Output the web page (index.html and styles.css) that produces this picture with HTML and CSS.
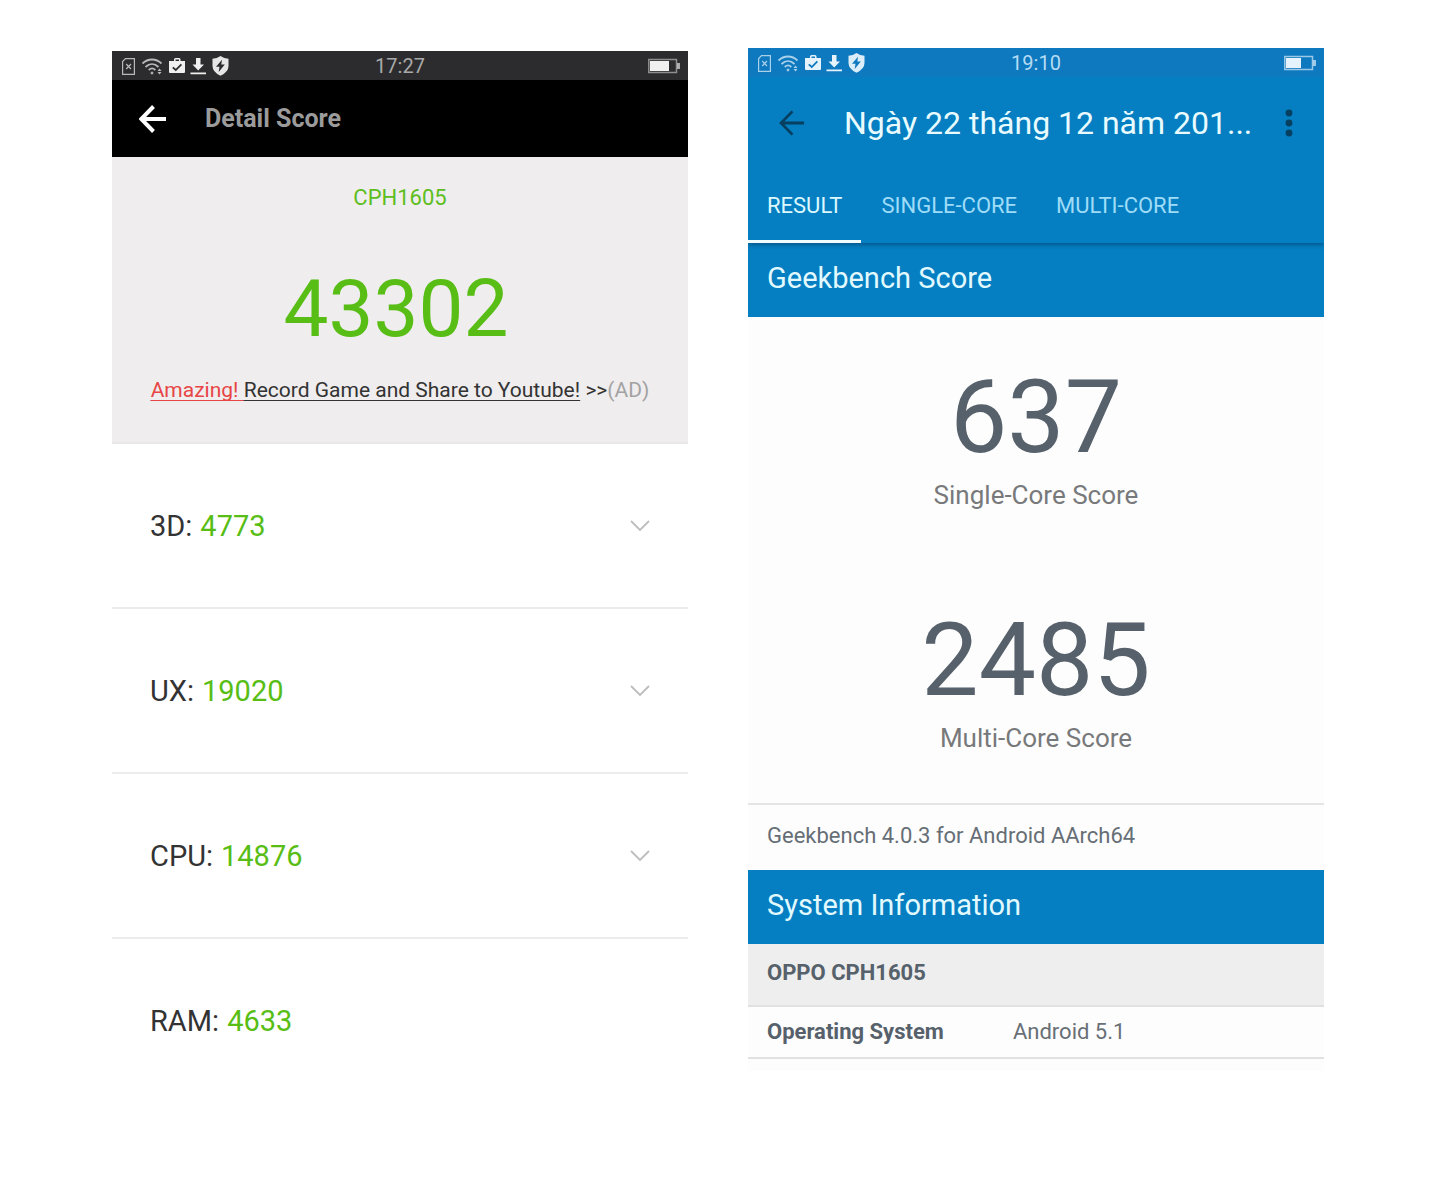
FILE: index.html
```html
<!DOCTYPE html>
<html lang="en">
<head>
<meta charset="utf-8">
<title>Benchmark results</title>
<link rel="stylesheet" href="styles.css">
</head>
<body>
<svg class="sprite" aria-hidden="true">
  <symbol id="status-icons" viewBox="0 0 110 22">
    <g fill="none" stroke="currentColor" opacity=".72">
      <path stroke-width="1.2" d="M5.5 3.6h8.9v15.8H2.6V6.5z"/>
      <path stroke-width="1.2" d="M6.2 9l4.8 5M11 9l-4.8 5"/>
      <path stroke-width="1.8" d="M22.500 8.500c5.500-5.300 13.500-5.300 19 0M25.500 12c4-3.800 9-3.800 13 0M28.800 15c2-2 4.500-2 6.500 0"/>
      <circle cx="32" cy="18" r="1" fill="currentColor"/>
      <path fill="currentColor" stroke="none" d="M37.500 16l2-2.500 2 2.500zM37.500 17l2 2.500 2-2.500z"/>
    </g>
    <path fill="currentColor" fill-rule="evenodd" d="M54 6V4.500Q54 3 55.500 3h3.500q1.500 0 1.500 1.500V6H65v11q0 1-1 1H50q-1 0-1-1V6zM55.500 6h3.500V4.500h-3.500zM53.300 11.700l-1.100 1.200 3.600 3.300 6.200-6.200-1.200-1.200-5 5z"/>
    <path fill="currentColor" d="M76 3h4.500v6.500H84L78.200 15.500 72.500 9.500H76zM70.500 17.500h15.500v1.800H70.500z"/>
    <path fill="currentColor" fill-rule="evenodd" opacity=".95" d="M100.500 1q3.500 2.500 8 2.700V11q0 6-8 9.800-8-3.800-8-9.800V3.700q4.500-.2 8-2.700zM102 4.800l-6 7h3.500L98.700 17l6.100-7.400h-3.500z"/>
  </symbol>
  <symbol id="chevron" viewBox="0 0 20 12">
    <path fill="none" stroke="currentColor" stroke-width="1.800" d="M1 1l9 9 9-9"/>
  </symbol>
  <symbol id="arrow" viewBox="0 0 28 28">
    <path fill="none" stroke="currentColor" d="M27 14H3M14.500 1.500L2.200 14l12.300 12.500"/>
  </symbol>
</svg>
<main class="screens">
  <section class="phone antutu" aria-label="Detail Score">
    <div class="status">
      <svg class="status-icons"><use href="#status-icons"/></svg>
      <time>17:27</time>
      <svg class="battery" viewBox="0 0 32 16"><path fill="none" stroke="currentColor" stroke-width="1.500" opacity=".5" d="M.8 1.500h27.700v13H.8z"/><path fill="currentColor" opacity=".65" d="M29 5h3v6h-3z"/><path fill="currentColor" d="M2 3h19v10H2z"/></svg>
    </div>
    <header class="bar">
      <button class="icon-button" aria-label="Back"><svg class="arrow"><use href="#arrow"/></svg></button>
      <h1>Detail Score</h1>
    </header>
    <div class="hero">
      <p class="model">CPH1605</p>
      <p class="total">43302</p>
      <p class="ad"><a href="#record"><span class="hot">Amazing! </span>Record Game and Share to Youtube!</a> &gt;&gt;<span class="tag">(AD)</span></p>
    </div>
    <ul class="scores">
      <li><button>3D: <b>4773</b><svg class="chevron"><use href="#chevron"/></svg></button></li>
      <li><button>UX: <b>19020</b><svg class="chevron"><use href="#chevron"/></svg></button></li>
      <li><button>CPU: <b>14876</b><svg class="chevron"><use href="#chevron"/></svg></button></li>
      <li><button>RAM: <b>4633</b></button></li>
    </ul>
  </section>

  <section class="phone geekbench" aria-label="Geekbench result">
    <header class="top">
      <div class="status">
        <svg class="status-icons"><use href="#status-icons"/></svg>
        <time>19:10</time>
        <svg class="battery" viewBox="0 0 32 16"><path fill="none" stroke="currentColor" stroke-width="1.500" opacity=".65" d="M.8 1.500h27.700v13H.8z"/><path fill="currentColor" opacity=".65" d="M29 5h3v6h-3z"/><path fill="currentColor" d="M2 3h15v10H2z"/></svg>
      </div>
      <div class="bar">
        <button class="icon-button" aria-label="Back"><svg class="arrow"><use href="#arrow"/></svg></button>
        <h1 lang="vi">Ngày 22 tháng 12 năm 201...</h1>
        <button class="icon-button" aria-label="More options"><svg class="dots" viewBox="0 0 8 28" fill="currentColor"><circle cx="4" cy="4" r="3.400"/><circle cx="4" cy="14" r="3.400"/><circle cx="4" cy="24" r="3.400"/></svg></button>
      </div>
      <nav class="tabs">
        <a class="active" href="#result">RESULT</a>
        <a href="#single">SINGLE-CORE</a>
        <a href="#multi">MULTI-CORE</a>
      </nav>
    </header>
    <h2>Geekbench Score</h2>
    <div class="result">
      <p class="number">637</p>
      <p class="label">Single-Core Score</p>
    </div>
    <div class="result">
      <p class="number">2485</p>
      <p class="label">Multi-Core Score</p>
    </div>
    <p class="version">Geekbench 4.0.3 for Android AArch64</p>
    <h2>System Information</h2>
    <table>
      <thead><tr><th colspan="2">OPPO CPH1605</th></tr></thead>
      <tbody><tr><th scope="row">Operating System</th><td>Android 5.1</td></tr></tbody>
    </table>
  </section>
</main>
</body>
</html>
```
FILE: styles.css
```css
* { box-sizing: border-box; }
body { margin: 0; background: #fff; font-family: Roboto, "Noto Sans", sans-serif; }
h1, h2, p, ul { margin: 0; padding: 0; }
button { border: 0; padding: 0; background: none; color: inherit; font: inherit; }
svg { display: block; }
.sprite { position: absolute; width: 0; height: 0; }

.screens {
  display: grid;
  grid-template-columns: minmax(0, 1fr) minmax(0, 1fr);
  gap: 60px;
  align-items: start;
  padding: 48px 119px 120px 112px;
}

.status {
  display: grid;
  grid-template-columns: 1fr auto 1fr;
  align-items: center;
  height: 29px;
  padding: 0 8px;
  font-size: 20px;
  line-height: 28px;
}
.status-icons { width: 110px; height: 22px; }
.battery { width: 32px; height: 16px; justify-self: end; }
.bar { display: flex; align-items: center; }
.icon-button { flex: none; }

.antutu { margin-top: 3px; }
.antutu .status { background: #2c2c2e; color: #f0f0f0; }
.antutu time { color: #a9a9a9; }
.antutu .bar { height: 77px; padding: 0 27px; gap: 38px; background: #000; color: #fff; }
.antutu .arrow { width: 28px; height: 28px; stroke-width: 4; }
.antutu h1 { color: #9b9b9b; font-size: 25px; line-height: 32px; }

.hero {
  padding: 27px 0 38px;
  background: #efedee;
  border-bottom: 2px solid #e9e8e9;
  text-align: center;
}
.model { color: #5dbe20; font-size: 22px; line-height: 28px; }
.total { margin: 57px 8px 27px 0; color: #58bd15; font-size: 80px; line-height: 80px; }
.ad { color: #333; font-size: 21px; line-height: 28px; }
.ad a { color: #333; text-underline-offset: 3px; text-decoration-thickness: 1px; text-decoration-skip-ink: none; }
.ad .hot { color: #e84545; text-decoration: underline 1px #e84545; text-underline-offset: 3px; text-decoration-skip-ink: none; }
.ad .tag { color: #a3a2a3; }

.scores { list-style: none; }
.scores li + li { border-top: 2px solid #ececec; }
.scores button {
  display: flex;
  align-items: center;
  gap: 8px;
  width: 100%;
  height: 163px;
  padding: 0 38px;
  color: #333;
  font-size: 29px;
  line-height: 36px;
}
.scores b { color: #58bd15; font-weight: 400; }
.chevron { width: 20px; height: 12px; margin-left: auto; color: #bdbdbd; }

.geekbench { padding-bottom: 12px; background: #fdfdfd; color: #56616b; }
.top { position: relative; background: #057fc1; box-shadow: 0 2px 4px rgba(0, 40, 80, .45); clip-path: inset(0 0 -8px 0); }
.geekbench .status { background: #0e79be; color: #e6f3fc; }
.geekbench time { color: #b5dcf4; }
.geekbench .bar { height: 92px; padding: 0 31px; gap: 39px; color: #073f60; }
.geekbench .arrow { width: 26px; height: 26px; stroke-width: 3; }
.dots { width: 8px; height: 28px; }
.geekbench h1 { flex: 1; min-width: 0; color: #e9fbff; font-size: 32px; font-weight: 400; line-height: 40px; white-space: nowrap; }
.tabs { display: flex; gap: 1px; }
.tabs a {
  height: 74px;
  padding: 23px 19px 0;
  border-bottom: 3px solid transparent;
  color: #9fdcf8;
  font-size: 22px;
  line-height: 28px;
  text-decoration: none;
}
.tabs .active { color: #dcf8ff; border-color: #f0fcff; }
h2 {
  padding: 17px 19px 21px;
  background: #057fc1;
  color: #e2faff;
  font-size: 29px;
  font-weight: 400;
  line-height: 36px;
}
.result { height: 243px; padding-top: 50px; text-align: center; }
.number { font-size: 102px; line-height: 100px; }
.label { margin-top: 12px; color: #78797b; font-size: 26px; line-height: 32px; }
.version {
  padding: 17px 19px 20px;
  border-top: 2px solid #e3e4e5;
  color: #666e76;
  font-size: 22px;
  line-height: 28px;
}
table { width: 100%; border-collapse: collapse; font-size: 22px; line-height: 28px; text-align: left; }
tr { border-bottom: 2px solid #e0e1e2; }
th, td { padding: 11px 19px; }
th[scope] { width: 46%; padding-right: 0; }
td { padding-left: 0; color: #686f76; }
thead th { padding: 15px 19px 18px; background: #eee; }
```
